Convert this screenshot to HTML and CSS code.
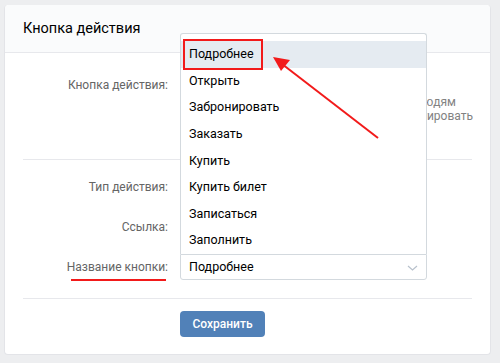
FILE: index.html
```html
<!DOCTYPE html>
<html>
<head>
    <title>Кнопка действия</title>
    <link rel="stylesheet" href="styles.css">
</head>
<body>
    <div class="card">
        <div class="card-header">Кнопка действия</div>

        <div class="section first">
            <div class="row">
                <div class="label">Кнопка действия:</div>
                <div class="field"><div class="select"></div></div>
                <div class="hint">
                    <div class="hint-inner">
                        <div class="hint-line one">Кнопка будет показана людям</div>
                        <div class="hint-line two">Её нельзя будет отредактировать</div>
                    </div>
                </div>
            </div>
        </div>

        <div class="divider"></div>

        <div class="section">
            <div class="row">
                <div class="label">Тип действия:</div>
                <div class="field"><div class="select"></div></div>
            </div>
            <div class="row">
                <div class="label">Ссылка:</div>
                <div class="field"><div class="select"></div></div>
            </div>
            <div class="row">
                <div class="label marked">Название кнопки:</div>
                <div class="field">
                    <!-- выпадающий список открыт вверх -->
                    <div class="dropdown">
                        <div class="option active">Подробнее</div>
                        <div class="option">Открыть</div>
                        <div class="option">Забронировать</div>
                        <div class="option">Заказать</div>
                        <div class="option">Купить</div>
                        <div class="option">Купить билет</div>
                        <div class="option">Записаться</div>
                        <div class="option">Заполнить</div>
                        <div class="red-box"></div>
                    </div>
                    <div class="select open">
                        Подробнее
                        <svg class="chevron" width="11" height="6" viewBox="0 0 11 6"><path d="M1 1 L5.5 5 L10 1" fill="none" stroke="#b8c1cc" stroke-width="1.2"/></svg>
                    </div>
                </div>
            </div>
        </div>

        <div class="divider"></div>

        <div class="actions">
            <a href="#" class="button">Сохранить</a>
        </div>
    </div>

    <!-- Стрелка-указатель -->
    <svg class="arrow" width="500" height="363" viewBox="0 0 500 363">
        <line x1="378" y1="138" x2="282" y2="64" stroke="#f21a1a" stroke-width="2"/>
        <polygon points="273,57 290,60 281,71" fill="#f21a1a"/>
    </svg>
</body>
</html>
```

FILE: styles.css
```css
body {
    margin: 0;
    background-color: #edeef0;
    font-family: Roboto, "Noto Sans", Arial, sans-serif;
    font-size: 12.5px;
    color: #000;
    position: relative;
    width: 500px;
    height: 363px;
    overflow: hidden;
}

.card {
    margin: 5px 0 0 4px;
    width: 485px;
    height: 349px;
    background-color: #fff;
    border: 1px solid #e3e4e8;
    border-top: none;
    border-radius: 4px;
    position: relative;
}

.card-header {
    height: 47px;
    line-height: 48px;
    padding-left: 18px;
    font-size: 14.5px;
    background-color: #fafbfc;
    border-bottom: 1px solid #e7e8ec;
    border-radius: 4px 4px 0 0;
}

.section {
    padding: 14px 0 4px 0;
}

.section.first {
    padding: 19px 0 61px 0;
}

.row {
    display: flex;
    height: 26px;
    margin-bottom: 14px;
}

.section.first .row {
    margin-bottom: 0;
}

.label {
    width: 163px;
    text-align: right;
    line-height: 26px;
    font-size: 12px;
    color: #656565;
    flex-shrink: 0;
}

.label.marked {
    position: relative;
}

/* красное подчеркивание */
.label.marked::after {
    content: "";
    position: absolute;
    left: 66px;
    right: 2px;
    bottom: -1px;
    height: 2px;
    background-color: #f21a1a;
}

.field {
    width: 247px;
    margin-left: 12px;
    position: relative;
    flex-shrink: 0;
}

.select {
    height: 24px;
    line-height: 24px;
    padding: 0 8px;
    border: 1px solid #d3d9de;
    border-radius: 3px;
    background-color: #fff;
    position: relative;
}

.select.open {
    border-radius: 0 0 3px 3px;
}

.chevron {
    position: absolute;
    right: 8px;
    top: 10px;
}

/* подсказка наполовину закрыта списком */
.hint {
    width: 47px;
    flex-shrink: 0;
    align-self: flex-start;
    margin-top: 23px;
    overflow: hidden;
}

.hint-inner {
    width: 200px;
    margin-left: -153px;
    text-align: right;
    color: #828282;
    font-size: 12px;
    line-height: 14px;
    white-space: nowrap;
}

.hint-line.one {
    padding-right: 18px;
}

.hint-line.two {
    padding-right: 1px;
}

.divider {
    height: 1px;
    margin: 0 18px;
    background-color: #e7e8ec;
}

.dropdown {
    position: absolute;
    left: 0;
    right: 0;
    bottom: 100%;
    padding-top: 7px;
    background-color: #fff;
    border: 1px solid #d3d9de;
    border-bottom: none;
    border-radius: 3px 3px 0 0;
    z-index: 2;
}

.option {
    height: 26.6px;
    line-height: 26.6px;
    padding-left: 8px;
}

.option.active {
    background-color: #e5ebf1;
}

.red-box {
    position: absolute;
    left: 2px;
    top: 5px;
    width: 76px;
    height: 27px;
    border: 2px solid #f21a1a;
}

.actions {
    padding: 12px 0 0 175px;
}

.button {
    display: inline-block;
    width: 85px;
    height: 26px;
    line-height: 26px;
    text-align: center;
    background-color: #5181b8;
    color: #fff;
    font-size: 12px;
    font-weight: 500;
    text-decoration: none;
    border-radius: 4px;
}

.arrow {
    position: absolute;
    left: 0;
    top: 0;
    pointer-events: none;
    z-index: 5;
}
```
